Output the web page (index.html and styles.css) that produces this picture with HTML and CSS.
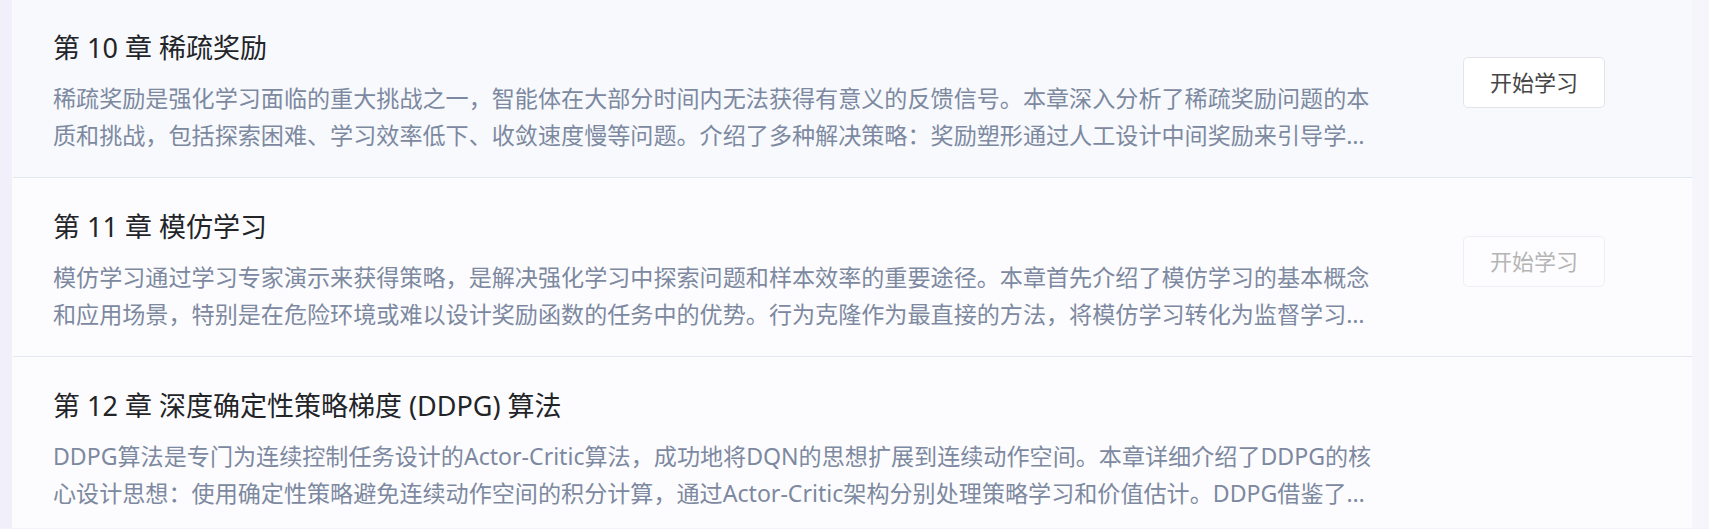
FILE: index.html
```html
<!DOCTYPE html>
<html lang="zh-CN">
<head>
<meta charset="utf-8">
<title>章节列表</title>
<link rel="stylesheet" href="styles.css">
</head>
<body>
<div class="page">
  <div class="side side-left"></div>
  <main class="card">
    <section class="row row-active">
      <div class="info">
        <h2 class="title">第 10 章 稀疏奖励</h2>
        <p class="desc">稀疏奖励是强化学习面临的重大挑战之一，智能体在大部分时间内无法获得有意义的反馈信号。本章深入分析了稀疏奖励问题的本质和挑战，包括探索困难、学习效率低下、收敛速度慢等问题。介绍了多种解决策略：奖励塑形通过人工设计中间奖励来引导学习过程，好奇心驱动探索利用内在动机鼓励智能体探索新状态。</p>
      </div>
      <button class="btn">开始学习</button>
    </section>
    <section class="row">
      <div class="info">
        <h2 class="title">第 11 章 模仿学习</h2>
        <p class="desc">模仿学习通过学习专家演示来获得策略，是解决强化学习中探索问题和样本效率的重要途径。本章首先介绍了模仿学习的基本概念和应用场景，特别是在危险环境或难以设计奖励函数的任务中的优势。行为克隆作为最直接的方法，将模仿学习转化为监督学习问题。</p>
      </div>
      <button class="btn btn-disabled">开始学习</button>
    </section>
    <section class="row">
      <div class="info">
        <h2 class="title">第 12 章 深度确定性策略梯度 (DDPG) 算法</h2>
        <p class="desc">DDPG算法是专门为连续控制任务设计的Actor-Critic算法，成功地将DQN的思想扩展到连续动作空间。本章详细介绍了DDPG的核心设计思想：使用确定性策略避免连续动作空间的积分计算，通过Actor-Critic架构分别处理策略学习和价值估计。DDPG借鉴了DQN的经验回放和目标网络技术。</p>
      </div>
      <div class="btn-slot"></div>
    </section>
  </main>
  <div class="side side-right"></div>
</div>
</body>
</html>
```
FILE: styles.css
```css
html, body {
  margin: 0;
  padding: 0;
}
body {
  background: #f4f3fb;
  font-family: "Noto Sans", "Noto Sans CJK SC", sans-serif;
  overflow: hidden;
}
.page {
  display: flex;
  height: 529px;
  margin-top: -1px;
}
.side-left {
  width: 12px;
  flex: none;
  background: #f1f0fa;
  border-right: 1px solid #fbfbfe;
}
.side-right {
  width: 17px;
  flex: none;
  background: #f6f5fb;
}
.card {
  flex: 1;
  display: flex;
  flex-direction: column;
  background: #fcfcfe;
}
.row {
  display: flex;
  align-items: flex-start;
  gap: 36px;
  padding: 30px 87px 23px 40px;
  border-bottom: 1px solid #e3e8f0;
  background: #fcfcfe;
  flex: none;
}
.row-active {
  background: #f7f9fd;
}
.info {
  flex: 1;
  min-width: 0;
}
.title {
  margin: 0;
  font-size: 27px;
  line-height: 38px;
  font-weight: 400;
  color: #222428;
}
.desc {
  margin: 13px 0 0;
  max-width: 1334px;
  font-size: 23.1px;
  line-height: 37px;
  color: #7d89a0;
  display: -webkit-box;
  -webkit-box-orient: vertical;
  -webkit-line-clamp: 2;
  overflow: hidden;
}
.btn,
.btn-slot {
  flex: none;
  margin-top: 28px;
  width: 142px;
  height: 51px;
}
.btn {
  padding: 0;
  font-family: inherit;
  font-size: 22px;
  line-height: 25px;
  color: #454545;
  background: #ffffff;
  border: 1px solid #e2e4ea;
  border-radius: 5px;
}
.btn-disabled {
  color: #b5b5b5;
  border-color: #eeeef3;
  background: #fdfdff;
}
```
